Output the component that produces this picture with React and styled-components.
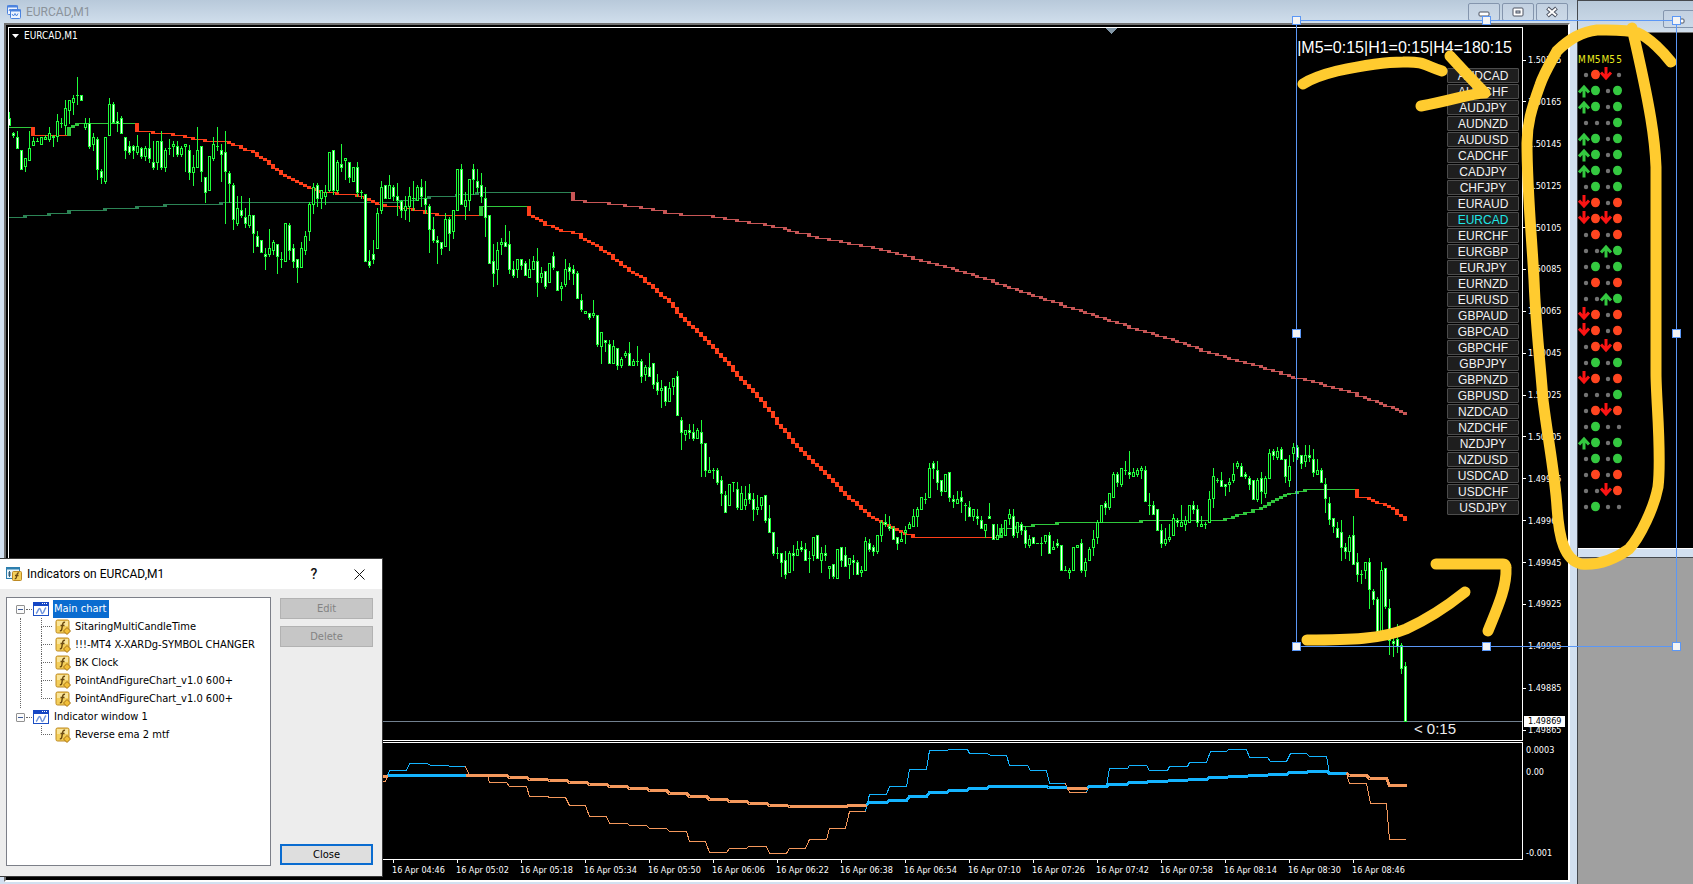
import { Fragment } from 'react';
import styled, { createGlobalStyle } from 'styled-components';

const GlobalStyle = createGlobalStyle`
  * {
    box-sizing: border-box;
  }
  body {
    margin: 0;
    background: #a0a0a0;
    overflow: hidden;
  }
  button {
    padding: 0;
    font: inherit;
  }
  ul {
    list-style: none;
    margin: 0;
    padding: 0;
  }
`;

const tahoma = `'DejaVu Sans Condensed', 'DejaVu Sans', sans-serif`;
const segoe = `Roboto, 'Open Sans', sans-serif`;
const arial = `'Liberation Sans', Arial, sans-serif`;

/* ---------- data ---------- */

const PAIRS = [
  ['AUDCAD', '.RD.'],
  ['AUDCHF', 'UG.G'],
  ['AUDJPY', 'UG.G'],
  ['AUDNZD', '...G'],
  ['AUDUSD', 'UG.G'],
  ['CADCHF', 'UG.G'],
  ['CADJPY', 'UG.G'],
  ['CHFJPY', '.G.G'],
  ['EURAUD', 'DR.R'],
  ['EURCAD', 'DRDR'],
  ['EURCHF', '.R.R'],
  ['EURGBP', '..UG'],
  ['EURJPY', '.G.G'],
  ['EURNZD', '.R.R'],
  ['EURUSD', '..UG'],
  ['GBPAUD', 'DR.R'],
  ['GBPCAD', 'DR.R'],
  ['GBPCHF', '.RDR'],
  ['GBPJPY', '.G.G'],
  ['GBPNZD', 'DR.R'],
  ['GBPUSD', '...G'],
  ['NZDCAD', '.RDR'],
  ['NZDCHF', '.G..'],
  ['NZDJPY', 'UG.G'],
  ['NZDUSD', '.G.G'],
  ['USDCAD', '.R.R'],
  ['USDCHF', '..DR'],
  ['USDJPY', '.G..'],
];

const PRICES = [
  '1.50185', '1.50165', '1.50145', '1.50125', '1.50105', '1.50085',
  '1.50065', '1.50045', '1.50025', '1.50005', '1.49985', '1.49965',
  '1.49945', '1.49925', '1.49905', '1.49885', '1.49865',
];

const TIMES = [
  '04:46', '05:02', '05:18', '05:34', '05:50', '06:06', '06:22', '06:38',
  '06:54', '07:10', '07:26', '07:42', '07:58', '08:14', '08:30', '08:46',
];

// one candle per entry: high, body top, body bottom, low, f = filled / h = hollow
const CANDLES = `
112 118 126 126 f,132 133 136 138 f,131 137 149 149 f,150 150 170 170 f,158 158 167 172 h,
131 148 161 161 h,137 141 146 146 h,138 141 142 142 h,137 137 145 145 h,135 137 140 140 h,
127 133 140 142 h,135 136 138 147 f,114 121 137 142 h,118 123 124 128 h,100 108 126 135 h,
100 100 111 124 h,95 98 103 115 h,77 95 96 105 h,95 95 101 101 f,118 123 128 130 h,
118 123 147 149 f,133 137 145 151 h,137 139 170 180 f,169 171 178 184 f,137 137 182 184 h,
98 104 136 136 h,102 104 123 124 f,112 121 124 132 f,116 118 134 134 f,137 137 151 159 f,
141 146 153 155 f,145 146 151 159 f,135 146 153 155 h,147 148 157 159 f,146 148 157 161 h,
133 148 159 163 f,141 162 168 170 f,141 141 163 170 h,131 141 168 170 f,148 150 168 172 h,
139 148 149 155 h,141 144 147 157 h,141 146 155 157 f,146 148 155 157 h,144 144 147 172 h,
145 150 173 180 f,155 167 173 186 h,127 150 168 168 h,146 146 172 182 f,177 177 193 203 f,
156 156 191 191 h,137 144 159 161 h,127 146 147 151 h,144 150 155 182 f,131 152 172 224 f,
171 173 184 203 f,183 185 220 230 f,196 208 224 226 h,196 210 216 218 f,208 217 224 228 f,
198 215 226 228 h,215 215 234 253 f,231 236 247 247 f,240 240 253 253 f,248 254 257 270 f,
229 248 255 257 h,240 242 251 255 h,244 244 257 274 f,252 259 260 268 h,223 223 262 262 h,
223 225 251 260 f,244 248 262 268 f,259 259 268 283 f,242 248 268 268 h,231 236 251 255 h,
202 204 232 241 h,183 187 205 214 h,183 185 199 207 f,190 190 199 209 h,185 192 197 205 h,
152 152 191 192 h,150 150 191 195 f,160 162 191 193 h,144 164 168 172 f,158 158 161 180 h,
162 162 178 183 f,167 167 182 182 h,162 167 193 197 f,190 192 193 199 h,194 194 262 262 f,
250 261 266 268 f,240 254 260 264 f,208 213 249 249 h,181 187 211 214 h,185 185 199 199 f,
175 185 199 199 h,185 187 197 201 f,183 196 201 216 f,200 201 211 218 f,196 206 211 220 h,
187 196 207 222 h,181 198 199 211 h,185 187 201 201 h,179 187 197 207 f,181 198 205 214 f,
204 206 230 253 f,217 229 241 243 f,236 240 243 264 f,242 242 249 255 f,213 219 247 247 h,
217 219 234 251 f,210 210 232 239 h,169 169 211 211 h,164 169 205 205 f,192 200 207 220 h,
179 179 201 211 h,164 169 180 195 f,169 181 188 193 f,173 185 197 203 f,187 198 218 237 f,
215 215 264 264 f,244 261 274 287 f,242 250 270 285 h,238 242 245 255 h,225 242 247 247 f,
231 244 270 274 f,261 269 276 278 f,259 259 270 278 h,259 259 266 270 f,261 263 276 276 f,
259 269 278 278 h,256 261 270 270 h,248 261 283 297 f,267 273 278 283 h,271 271 287 289 f,
263 263 283 283 h,252 256 268 270 f,271 271 291 291 f,282 286 289 301 h,259 269 285 287 h,
263 267 272 280 f,265 269 274 285 f,271 273 299 299 f,294 300 310 312 f,311 311 314 314 h,
313 313 318 320 f,300 313 316 318 h,315 315 345 347 f,332 332 347 364 h,340 340 343 352 f,
340 344 364 364 f,340 346 364 364 h,348 348 366 370 f,357 359 366 368 h,351 353 356 358 h,
342 353 366 366 f,359 361 366 366 h,346 361 362 366 h,359 361 377 383 f,365 367 375 381 h,
353 367 377 377 f,363 363 385 389 f,374 382 391 395 f,380 388 391 408 h,386 386 402 406 f,
382 388 402 402 h,378 378 387 395 h,371 376 416 416 f,417 420 433 450 f,430 430 435 441 h,
424 430 433 439 f,424 432 439 441 f,428 430 439 439 h,420 432 444 477 f,443 443 471 477 f,
457 470 473 473 h,468 470 471 479 h,468 470 483 485 f,476 480 494 506 f,491 495 513 513 f,
484 484 506 506 h,482 482 483 492 h,482 489 508 510 f,486 493 510 510 h,486 499 506 510 h,
484 493 500 504 f,493 499 510 521 f,495 507 510 515 h,497 497 506 510 h,495 495 521 523 f,
505 518 533 533 f,532 532 554 556 f,547 553 554 559 h,553 553 563 577 f,551 560 575 579 f,
551 553 573 573 h,545 553 556 571 f,541 549 556 556 h,541 547 550 552 f,543 549 561 561 f,
551 558 559 573 h,537 537 556 561 h,535 535 559 559 f,547 553 561 573 h,545 553 556 561 f,
566 566 569 579 h,564 564 577 579 f,549 549 579 579 h,547 547 561 567 f,547 555 567 567 f,
558 558 565 579 h,555 560 563 575 f,560 562 575 575 f,566 570 573 577 h,537 541 571 571 h,
539 543 550 552 f,545 547 552 556 f,535 535 552 554 h,520 522 536 542 h,514 522 525 527 f,
516 526 529 531 f,526 528 540 540 f,537 537 544 550 f,532 539 542 542 h,526 530 533 544 h,
522 524 529 529 h,509 516 527 527 h,507 509 517 527 h,497 497 510 510 h,493 499 500 504 h,
463 468 498 498 h,461 463 469 479 f,461 470 483 490 f,480 480 492 496 f,474 474 492 492 h,
472 472 498 502 f,495 499 502 508 f,491 499 504 504 h,491 497 502 513 f,503 505 506 521 h,
501 507 517 517 f,509 509 517 521 h,509 516 519 525 f,516 520 529 529 f,524 524 531 538 h,
503 516 519 519 f,524 524 540 540 f,524 535 540 540 h,524 532 536 536 h,520 520 536 536 h,
509 514 519 525 h,509 516 536 538 f,522 522 533 538 h,522 524 531 535 f,526 530 544 548 f,
535 539 546 548 h,537 537 544 544 f,543 543 544 544 h,537 543 544 556 h,535 535 542 544 h,
532 535 554 554 f,541 547 550 550 h,539 543 546 548 f,545 545 571 571 f,566 570 571 571 h,
568 570 573 579 h,547 547 571 571 h,545 545 548 548 h,539 543 571 573 f,558 562 571 577 h,
547 549 561 561 h,530 539 548 556 h,520 522 538 544 h,505 505 523 523 h,501 503 508 515 f,
493 493 508 510 h,472 474 498 498 h,472 474 483 487 f,468 468 485 487 h,461 470 471 475 h,
451 472 475 479 f,468 472 477 477 h,468 470 475 477 h,466 468 471 479 h,466 470 502 502 f,
493 505 506 515 h,501 505 515 515 f,509 509 531 531 f,524 530 544 548 f,528 539 544 546 h,
524 537 540 542 h,514 518 536 536 h,518 520 523 527 f,505 522 527 527 h,516 520 525 531 h,
505 505 523 523 h,501 505 510 514 f,505 509 523 527 f,516 524 527 527 h,522 524 525 529 h,
491 499 523 523 h,468 476 499 508 h,478 480 481 483 h,472 480 487 487 f,484 484 487 496 f,
478 482 485 492 h,463 474 481 483 h,461 463 467 469 h,463 466 477 477 f,472 474 477 479 f,
476 478 485 490 f,480 480 500 500 f,478 480 500 502 h,472 478 492 504 f,476 478 494 498 h,
449 453 479 479 h,449 451 456 460 f,447 451 458 460 h,447 449 460 460 f,459 459 477 483 f,
455 466 481 487 h,443 447 454 462 h,445 447 458 460 f,455 455 464 469 f,445 455 462 467 h,
445 455 458 462 f,449 459 473 477 f,459 470 475 475 h,468 470 483 483 f,478 484 499 513 f,
497 503 520 525 f,518 518 527 533 f,522 528 538 538 f,520 532 548 561 f,543 547 552 559 f,
535 537 552 561 h,516 535 565 565 f,553 562 575 582 f,570 574 575 584 h,562 562 571 579 h,
558 562 590 609 f,589 591 600 605 f,597 599 635 638 f,562 570 637 641 h,568 568 607 609 f,
599 608 641 655 f,635 641 644 657 f,624 639 647 653 f,643 645 669 674 f,662 666 722 722 f`
  .split(',')
  .map((row) => row.trim().split(' '));

// average lines: "x y", a letter after it switches the colour
const FAST_MA = `9 127 g,31 135 o,67 127 g,71 125,75 123,135 131 o,151 133,171 135,183 137,191 139,203 141,
227 143,231 145,239 148,243 150,251 152,255 156,259 158,263 160,267 164,271 168,275 170,279 174,283 176,
287 178,291 180,295 182,299 184,303 186,307 188,315 190,319 192,335 194,355 196,363 198,367 200,371 202,
375 204,383 206,399 208,411 210,423 213,435 215,479 206 g,527 215 o,531 217,535 219,539 221,543 225,
551 227,555 229,559 231,571 233,579 238,583 240,587 242,591 244,595 246,599 250,603 252,607 254,611 259,
615 261,619 265,623 267,627 271,631 273,635 275,639 277,643 282,647 284,651 288,655 292,659 296,663 298,
667 302,671 307,675 313,679 317,683 321,687 325,691 328,695 332,699 336,703 340,707 344,711 348,715 353,
719 357,723 361,727 365,731 371,735 376,739 380,743 384,747 388,751 392,755 397,759 401,763 407,767 411,
771 417,775 424,779 428,783 432,787 438,791 443,795 447,799 451,803 455,807 459,811 463,815 466,819 470,
823 474,827 478,831 482,835 486,839 491,843 495,847 499,851 501,855 505,859 509,863 512,867 516,871 518,
875 520,879 522,883 524,887 526,891 528,895 530,899 532,903 534,911 537,999 528 g,1015 526,1031 524,
1055 522,1139 520,1223 518,1231 516,1235 514,1243 512,1251 509,1259 507,1263 505,1267 502,1271 500,
1275 498,1279 496,1283 494,1287 493,1295 491,1303 489,1355 497 o,1367 499,1371 501,1375 503,1383 505,
1387 507,1391 509,1395 514,1399 516,1403 520`;

const SLOW_MA = `9 217 d,23 215,47 213,67 210,103 208,135 206,163 204,219 202,399 200,415 198,427 196,455 194,
475 192,571 200 p,583 202,607 204,623 206,639 208,651 210,663 213,679 215,711 217,723 219,735 221,747 223,
763 225,771 227,783 229,787 231,795 233,807 236,815 238,827 240,839 242,847 244,859 246,871 248,879 250,
887 252,895 254,903 256,911 259,919 261,927 263,935 265,943 267,951 269,955 271,963 273,971 275,975 277,
983 279,991 282,995 284,1003 286,1007 288,1015 290,1019 292,1027 294,1031 296,1039 298,1043 300,1051 302,
1059 305,1063 307,1071 309,1079 311,1083 313,1091 315,1095 317,1103 319,1107 321,1115 323,1123 325,
1127 328,1135 330,1143 332,1151 334,1155 336,1163 338,1171 340,1175 342,1183 344,1187 346,1195 348,
1199 351,1207 353,1215 355,1223 357,1227 359,1235 361,1243 363,1251 365,1259 367,1263 369,1271 371,
1279 374,1287 376,1291 378,1303 380,1311 382,1319 384,1323 386,1331 388,1339 390,1347 392,1355 396,
1363 398,1367 400,1375 402,1379 404,1383 406,1391 408,1395 410,1399 412,1403 414`;

const MA_COLORS = { g: '#30c83c', o: '#ff3f1a', d: '#2c8455', p: '#c85656' };

const OSC_THIN = [
  ['#f4985c', '382,781 385,781 386,778'],
  ['#14b4ff', '386,778 389,770 406,770 409,763 427,763 430,765 448,765 449,766 465,766'],
  [
    '#f4985c',
    '465,766 469,775 487,775 489,782 506,782 509,786 526,786 529,796 547,796 549,797 565,797 569,805 585,805 589,816 606,816 609,823 627,823 629,825 646,825 649,828 666,828 669,831 686,831 689,841 705,841 709,852 726,852 729,848 746,848 748,846 766,846 769,853 786,853 789,848 805,848 809,839 826,839 829,828 845,828 849,811 865,811',
  ],
  [
    '#14b4ff',
    '865,811 869,794 886,794 889,786 906,786 909,769 926,769 929,750 947,750 948,749 967,749 969,753 987,753 990,755 1006,755 1009,765 1027,765 1030,770 1046,770 1049,783 1065,783',
  ],
  ['#f4985c', '1065,783 1069,792 1086,792'],
  [
    '#14b4ff',
    '1086,792 1088,786 1106,786 1109,768 1127,768 1129,765 1146,765 1149,770 1167,770 1169,766 1187,766 1189,762 1206,762 1210,751 1226,751 1228,749 1246,749 1249,757 1267,757 1270,761 1286,761 1290,753 1306,753 1309,756 1326,756 1329,773 1346,773',
  ],
  ['#f4985c', '1346,773 1349,783 1366,783 1370,803 1386,803 1389,839 1405,839'],
];

const OSC_THICK = [
  ['#f4985c', '382,776 387,776'],
  ['#14b4ff', '387,775 465,775'],
  [
    '#f4985c',
    '465,775 506,775 509,777 526,777 529,779 546,779 549,780 566,780 569,782 586,782 589,784 606,784 609,786 626,786 629,788 646,788 649,790 666,790 669,793 686,793 689,796 706,796 709,799 726,799 729,801 746,801 749,803 766,803 769,805 786,805 789,806 846,806 848,805 866,805',
  ],
  [
    '#14b4ff',
    '866,804 869,802 886,802 889,800 906,800 909,796 926,796 929,792 946,792 949,790 966,790 969,788 986,788 989,786 1046,786 1048,787 1066,787',
  ],
  ['#f4985c', '1066,788 1087,788'],
  [
    '#14b4ff',
    '1087,787 1089,786 1106,786 1109,784 1126,784 1129,782 1146,782 1148,781 1166,781 1169,780 1186,780 1189,779 1206,779 1209,777 1226,777 1229,776 1246,776 1249,775 1266,775 1269,774 1286,774 1289,772 1306,772 1308,771 1326,771 1329,773 1346,773',
  ],
  ['#f4985c', '1346,773 1349,775 1366,775 1369,778 1386,778 1389,785 1406,785'],
];

const TREE = [
  {
    name: 'Main chart',
    selected: true,
    items: [
      'SitaringMultiCandleTime',
      '!!!-MT4 X-XARDg-SYMBOL CHANGER',
      'BK Clock',
      'PointAndFigureChart_v1.0 600+',
      'PointAndFigureChart_v1.0 600+',
    ],
  },
  { name: 'Indicator window 1', items: ['Reverse ema 2 mtf'] },
];

/* ---------- windows ---------- */

const Desktop = styled.div`
  position: relative;
  display: flex;
  min-height: 100vh;
  background: #a0a0a0;
  overflow: hidden;
`;

const MainWindow = styled.main`
  flex: 1;
  min-width: 0;
  display: flex;
  flex-direction: column;
  padding: 0 7px 2px 4px;
  background: #d2e0f0;
`;

const TitleBar = styled.header`
  display: flex;
  align-items: center;
  height: 23px;
  margin: 0 -7px 0 -4px;
  padding: 0 9px 0 7px;
  gap: 5px;
  background: linear-gradient(#b8c9da, #d0deec);
  color: #8b939b;
  font: 12px ${segoe};
`;

const WindowTitle = styled.span`
  flex: 1;
`;

const WindowButtons = styled.div`
  display: flex;
  gap: 2px;
`;

const CaptionButton = styled.button`
  display: flex;
  align-items: center;
  justify-content: center;
  flex: none;
  width: 32px;
  height: 18px;
  border: 1px solid #8495ad;
  border-radius: 2px;
  background: linear-gradient(#c3d1e1, #cbd9e8);
`;

const Frame = styled.section`
  flex: 1;
  display: grid;
  grid-template-columns: minmax(0, 1fr) 45px;
  grid-template-rows: minmax(714px, 1fr) 119px 20px;
  padding: 2px 0 0 2px;
  background: #000;
  border-style: solid;
  border-width: 2px;
  border-color: #707070 #fff #fff #707070;
`;

const Pane = styled.div`
  position: relative;
  display: flex;
  justify-content: flex-end;
  border: 1px solid #fff;
  margin-top: ${(p) => (p.$gap ? '1px' : 0)};
  overflow: hidden;
`;

const Plot = styled.svg`
  flex: none;
  display: block;
`;

const PaneOverlay = styled.div`
  position: absolute;
  inset: 0;
  display: flex;
  flex-direction: column;
`;

const PaneHeader = styled.div`
  display: flex;
  justify-content: space-between;
  height: 40px;
  padding: 0 10px 0 3px;
  color: #fff;
`;

const SymbolName = styled.span`
  display: flex;
  align-items: center;
  gap: 5px;
  height: 15px;
  font: 10px ${tahoma};
`;

const Countdown = styled.span`
  padding-top: 11px;
  font: 16px/18px ${arial};
`;

const PairList = styled.nav`
  align-self: flex-end;
  display: flex;
  flex-direction: column;
  gap: 1px;
  width: 72px;
  margin-right: 3px;
`;

const PairButton = styled.button`
  height: 15px;
  border: 1px solid #4c4c4c;
  border-radius: 1px;
  background: #1e1e1e;
  color: ${(p) => (p.$active ? '#1fe6e6' : '#f2f2f2')};
  font: 12px/12px ${arial};
`;

const TickClock = styled.span`
  align-self: flex-end;
  margin: auto 66px 2px 0;
  color: #eee;
  font: 15px/18px ${arial};
`;

const PriceAxis = styled.div`
  position: relative;
  display: flex;
  flex-direction: column;
  justify-content: space-between;
  padding: 26px 0 4px;
  color: #fff;
  font: 9px/14px ${tahoma};
`;

const AxisLabel = styled.span`
  display: flex;
  align-items: center;
  gap: 2px;
  &::before {
    content: '';
    width: 3px;
    height: 1px;
    background: #fff;
  }
`;

const CurrentPrice = styled.span`
  position: absolute;
  left: 1px;
  bottom: 14px;
  width: 41px;
  padding-left: 4px;
  background: #fff;
  color: #000;
  line-height: 11px;
`;

const OscAxis = styled.div`
  display: flex;
  flex-direction: column;
  padding: 2px 0 0 3px;
  color: #fff;
  font: 9px/14px ${tahoma};
  & > :nth-child(2) {
    margin-top: 8px;
  }
  & > :last-child {
    margin-top: auto;
  }
`;

const TimeAxis = styled.div`
  display: flex;
  padding-left: 384px;
  color: #fff;
  font: 9px/14px ${tahoma};
`;

const TimeLabel = styled.span`
  flex: none;
  width: 64px;
  white-space: nowrap;
  &::before {
    content: '';
    display: block;
    width: 1px;
    height: 3px;
    margin-left: 1px;
    background: #fff;
  }
`;

const SideArea = styled.aside`
  flex: none;
  width: 116px;
  border-left: 1px solid #45494e;
  overflow: hidden;
`;

const SideWindow = styled.section`
  display: flex;
  flex-direction: column;
  height: 558px;
  border-top: 1px solid #45494e;
  border-bottom: 1px solid #45494e;
  background: #d2e0f0;
`;

const SideTitle = styled.header`
  display: flex;
  justify-content: flex-end;
  align-items: flex-end;
  height: 31px;
  padding-bottom: 4px;
  margin-right: -2px;
  background: linear-gradient(#b8c9da, #d0deec);
`;

const SideBody = styled.div`
  flex: 1;
  margin-bottom: 8px;
  padding-top: 19px;
  border-top: 1px solid #707070;
  border-bottom: 1px solid #fff;
  background: #000;
`;

const SignalHeader = styled.div`
  display: flex;
  justify-content: space-between;
  width: 44px;
  height: 14px;
  color: #eaea1e;
  font: 10px/16px ${tahoma};
`;

const SignalRow = styled.div`
  display: grid;
  grid-template-columns: repeat(4, 11px);
  align-items: center;
  height: 16px;
  padding-left: 1px;
  & > svg {
    display: block;
    overflow: visible;
  }
`;

/* ---------- dialog ---------- */

const Dialog = styled.section`
  position: absolute;
  left: 0;
  bottom: 7px;
  width: 383px;
  border: 1px solid #3a3a3a;
  border-left: 0;
  background: #ededed;
  color: #000;
`;

const DialogTitle = styled.header`
  display: flex;
  align-items: center;
  gap: 5px;
  height: 30px;
  padding: 0 16px 0 6px;
  background: #fff;
  font: 12px ${segoe};
`;

const DialogTitleText = styled.h1`
  flex: 1;
  margin: 0;
  font: inherit;
`;

const BareButton = styled.button`
  display: flex;
  align-items: center;
  justify-content: center;
  width: 14px;
  height: 20px;
  margin-left: 26px;
  border: 0;
  background: none;
  color: #111;
  font: 500 14px ${segoe};
`;

const DialogBody = styled.div`
  display: flex;
  gap: 9px;
  padding: 8px 9px 10px 6px;
`;

const TreeBox = styled.div`
  flex: 1;
  height: 269px;
  padding: 2px 0 0 9px;
  border: 1px solid #7c7f88;
  background: #fff;
  font: 11px/18px ${tahoma};
  white-space: nowrap;
`;

const TreeRow = styled.div`
  display: flex;
  align-items: center;
  height: 18px;
`;

const Toggle = styled.button`
  display: flex;
  align-items: center;
  justify-content: center;
  width: 9px;
  height: 9px;
  border: 1px solid #919191;
  border-radius: 1px;
  background: #fbfbfb;
  &::before {
    content: '';
    width: 5px;
    height: 1px;
    background: #3b5998;
  }
`;

const Dots = styled.span`
  width: 6px;
  margin: 0 1px;
  border-top: 1px dotted #666;
`;

const RootLabel = styled.span`
  margin-left: 4px;
  padding: 0 2px 0 1px;
  background: ${(p) => (p.$selected ? '#0a6cd0' : 'transparent')};
  color: ${(p) => (p.$selected ? '#fff' : '#000')};
`;

const Branch = styled.ul`
  margin-left: 4px;
  padding-left: 20px;
  border-left: 1px dotted ${(p) => (p.$last ? 'transparent' : '#666')};
`;

const Elbow = styled.span`
  display: grid;
  grid-template-rows: 9px 9px;
  width: 11px;
  margin-right: 3px;
  &::before {
    content: '';
    border: 0 dotted #666;
    border-width: 0 0 1px 1px;
  }
  &::after {
    content: '';
    border-left: ${(p) => (p.$last ? '0' : '1px dotted #666')};
  }
`;

const LeafLabel = styled.span`
  margin-left: 4px;
`;

const ButtonColumn = styled.div`
  display: flex;
  flex-direction: column;
  gap: 7px;
  width: 93px;
  padding: 1px 0;
`;

const DialogButton = styled.button`
  height: 21px;
  border: 1px solid #b2b2b2;
  background: #c6c6c6;
  color: #838383;
  font: 11px ${tahoma};
  &:last-child {
    margin-top: auto;
    border: 2px solid #0a6cd0;
    background: #dedede;
    color: #000;
  }
`;

const Annotations = styled.svg`
  position: absolute;
  top: 0;
  right: 0;
  pointer-events: none;
`;

/* ---------- icons ---------- */

const ChartsIcon = () => (
  <svg width="14" height="14" viewBox="0 0 14 14" aria-hidden="true">
    <rect x="0.5" y="0.5" width="10" height="9" rx="1" fill="#eef4ff" stroke="#4c83de" />
    <path d="M0 1.500h11" stroke="#4c83de" strokeWidth="2" />
    <path d="M2 6l1-2 1.500 2 1.500-2" fill="none" stroke="#4c83de" />
    <rect x="3.500" y="4.500" width="10" height="9" rx="1" fill="#eef4ff" stroke="#4c83de" />
    <path d="M3 5.500h11" stroke="#4c83de" strokeWidth="2" />
    <path d="M5 9l1.500 2 1.500-2.500 1.500 2.500 1.500-2.500" fill="none" stroke="#4c83de" />
  </svg>
);

const MinIcon = () => (
  <svg width="12" height="12" viewBox="0 0 12 12" aria-hidden="true">
    <rect x="1" y="6" width="10" height="4" rx="1" fill="#fff" stroke="#4d5361" />
  </svg>
);

const MaxIcon = () => (
  <svg width="12" height="12" viewBox="0 0 12 12" aria-hidden="true">
    <rect x="1" y="2" width="10" height="8" rx="1" fill="#fff" stroke="#4d5361" />
    <rect x="4" y="5" width="4" height="2" fill="#c8d6e5" stroke="#4d5361" />
  </svg>
);

const CloseIcon = () => (
  <svg width="12" height="12" viewBox="0 0 12 12" aria-hidden="true">
    <path d="M1.500 2l9 8M10.500 2l-9 8" stroke="#4d5361" strokeWidth="4" />
    <path d="M2 2.500l8 7M10 2.500l-8 7" stroke="#fff" strokeWidth="2" />
  </svg>
);

const FunctionIcon = () => (
  <svg width="16" height="16" viewBox="0 0 16 16" aria-hidden="true">
    <rect x="1" y="1" width="13" height="13" rx="1.500" fill="#f4cf5c" stroke="#bd8a24" />
    <rect x="2" y="2" width="11" height="5" fill="#fae59a" />
    <path
      d="M10 3.500c-1.600-.6-2.100.4-2.400 2L6.700 10.500c-.3 1.300-.9 1.500-1.900 1.200M5.500 6.500h4"
      fill="none"
      stroke="#6b4a10"
      strokeWidth="1.400"
    />
    <path d="M12 8.500l3.500 3.500-3.500 3.500L8.500 12z" fill="#f2bf38" stroke="#a87414" />
  </svg>
);

const WindowIcon = () => (
  <svg width="16" height="14" viewBox="0 0 16 14" aria-hidden="true">
    <rect x="0.500" y="0.500" width="15" height="13" fill="#fff" stroke="#1c4fc4" />
    <rect width="16" height="4" fill="#1546c4" />
    <path d="M9 1.500h1M11 1.500h1M13 1.500h1" stroke="#fff" />
    <path d="M3 11.500c2-1 2-5 3.500-5s1.500 5 3 5 1.500-4 3.500-6" fill="none" stroke="#6f94dd" strokeWidth="1.500" />
  </svg>
);

const IndicatorsIcon = () => (
  <svg width="16" height="15" viewBox="0 0 16 15" aria-hidden="true">
    <rect x="0.500" y="0.500" width="13" height="11" fill="#eaf5fc" stroke="#2d7fae" />
    <path d="M0 1.500h14" stroke="#2d7fae" strokeWidth="2" />
    <path d="M3.500 4v6M2 6h3M2 8h3" stroke="#375f78" />
    <rect x="6.500" y="4.500" width="9" height="9" rx="1" fill="#f4cf5c" stroke="#bd8a24" />
    <path d="M13 6c-1.400-.4-1.700.4-2 1.600l-.7 3c-.2 1-.8 1.200-1.600 1M9 8.500h3.500" fill="none" stroke="#6b4a10" strokeWidth="1.300" />
  </svg>
);

const Signal = ({ type }) => (
  <svg width="11" height="12" viewBox="0 0 11 12" aria-hidden="true">
    {type === '.' && <circle cx="7" cy="7" r="2.200" fill="#737373" />}
    {type === 'R' && <ellipse cx="5.500" cy="6.500" rx="4.500" ry="4.800" fill="#ff4520" />}
    {type === 'G' && <ellipse cx="5.500" cy="6.500" rx="4.500" ry="4.800" fill="#34c840" />}
    {type === 'D' && (
      <path d="M5-1v11M0 4.500l5 5.500 5-5.500" fill="none" stroke="#fb1414" strokeWidth="3" />
    )}
    {type === 'U' && (
      <path d="M5 13.500V3M0 8.500L5 3l5 5.500" fill="none" stroke="#34c840" strokeWidth="3" />
    )}
  </svg>
);

/* ---------- drawing ---------- */

const StepLine = ({ data }) => {
  let color = '';
  const steps = data.split(',').map((row) => {
    const [x, y, c] = row.trim().split(' ');
    color = c || color;
    return { x: Number(x), y: Number(y), color };
  });
  return steps.map((s, i) => {
    const next = steps[i + 1] ? steps[i + 1].x : s.x + 4;
    const prev = i ? steps[i - 1].y : s.y;
    return (
      <Fragment key={s.x}>
        <rect x={s.x} y={s.y} width={next - s.x} height="1" fill={MA_COLORS[s.color]} />
        {i > 0 && (
          <rect
            x={s.x}
            y={Math.min(prev, s.y)}
            width="4"
            height={Math.abs(s.y - prev) + 1}
            fill={MA_COLORS[s.color]}
          />
        )}
      </Fragment>
    );
  });
};

const Candle = ({ x, candle }) => {
  const [high, top, bottom, low] = candle.map(Number);
  const height = bottom - top;
  return (
    <>
      <rect x={x} y={high} width="1" height={low - high} fill="#1fff3a" />
      <rect x={x - 1} y={top} width="3" height={height} fill="#1fff3a" />
      {height > 2 && (
        <rect x={x} y={top + 1} width="1" height={height - 2} fill={candle[4] === 'f' ? '#fff' : '#000'} />
      )}
    </>
  );
};

const PricePlot = () => (
  <Plot width="1513" height="712" viewBox="9 28 1513 712" shapeRendering="crispEdges" role="img" aria-label="EURCAD price">
    <rect x="9" y="721" width="1513" height="1" fill="#71808f" />
    <path d="M1106 28h11l-5.500 6z" fill="#8296a6" />
    <StepLine data={SLOW_MA} />
    <StepLine data={FAST_MA} />
    {CANDLES.map((candle, i) => (
      <Candle key={i} x={9 + i * 4} candle={candle} />
    ))}
  </Plot>
);

const OscPlot = () => (
  <Plot width="1513" height="116" viewBox="9 743 1513 116" shapeRendering="crispEdges" role="img" aria-label="Reverse ema">
    <g fill="none" transform="translate(0.5 0.5)">
      {OSC_THIN.map(([stroke, points]) => (
        <polyline key={points} points={points} stroke={stroke} />
      ))}
      {OSC_THICK.map(([stroke, points]) => (
        <polyline key={points} points={points} stroke={stroke} strokeWidth="3" />
      ))}
    </g>
  </Plot>
);

const Handle = ({ x, y }) => (
  <rect x={x - 4} y={y - 4} width="8" height="8" fill="#f4f4f4" stroke="#5b97f6" />
);

const Markup = () => (
  <Annotations width="420" height="700" viewBox="1273 0 420 700" aria-hidden="true">
    <g fill="none" stroke="#ffcb2f" strokeWidth="11" strokeLinecap="round" strokeLinejoin="round">
      <path d="M1303 84C1312 78 1325 74 1337 71C1360 66 1385 62 1403 62C1424 61 1426 66 1442 71" />
      <path d="M1450 56C1462 69 1478 86 1485 93C1472 93 1450 101 1421 106" />
      <path d="M1671 62C1664 53 1650 38 1638 33C1626 29 1603 30 1597 30C1580 32 1566 42 1557 51C1551 62 1544 73 1540 85C1531 110 1527 125 1527 143C1527 190 1532 240 1534 280C1536 330 1541 370 1543 400C1548 440 1555 475 1557 507C1559 540 1565 560 1581 564C1600 566 1618 557 1629 549C1640 537 1654 508 1658 487C1662 455 1656 400 1656 373V167C1655 140 1651 110 1632 28" />
      <path d="M1307 640C1350 640 1382 639 1406 629C1430 618 1450 604 1465 592" />
      <path d="M1436 564H1503Q1506 564 1506 568C1507 588 1496 611 1488 631" />
    </g>
    <rect x="1296.500" y="20.500" width="380" height="626" fill="none" stroke="#5b97f6" />
    {[1296.5, 1486.5, 1676.5].map((x) => (
      <Fragment key={x}>
        <Handle x={x} y={20.5} />
        {x !== 1486.5 && <Handle x={x} y={333.5} />}
        <Handle x={x} y={646.5} />
      </Fragment>
    ))}
  </Annotations>
);

/* ---------- parts ---------- */

const Chart = () => (
  <Frame>
    <Pane>
      <PricePlot />
      <PaneOverlay>
        <PaneHeader>
          <SymbolName>
            <svg width="7" height="4" aria-hidden="true">
              <path d="M0 0h7l-3.500 4z" fill="#fff" />
            </svg>
            EURCAD,M1
          </SymbolName>
          <Countdown>|M5=0:15|H1=0:15|H4=180:15</Countdown>
        </PaneHeader>
        <PairList>
          {PAIRS.map(([name]) => (
            <PairButton key={name} $active={name === 'EURCAD'}>
              {name}
            </PairButton>
          ))}
        </PairList>
        <TickClock>&lt; 0:15</TickClock>
      </PaneOverlay>
    </Pane>
    <PriceAxis>
      {PRICES.map((price) => (
        <AxisLabel key={price}>{price}</AxisLabel>
      ))}
      <CurrentPrice>1.49869</CurrentPrice>
    </PriceAxis>
    <Pane $gap>
      <OscPlot />
    </Pane>
    <OscAxis>
      <span>0.0003</span>
      <span>0.00</span>
      <span>-0.001</span>
    </OscAxis>
    <TimeAxis>
      {TIMES.map((time) => (
        <TimeLabel key={time}>16 Apr {time}</TimeLabel>
      ))}
    </TimeAxis>
  </Frame>
);

const IndicatorsDialog = () => (
  <Dialog role="dialog" aria-labelledby="dialog-title">
    <DialogTitle>
      <IndicatorsIcon />
      <DialogTitleText id="dialog-title">Indicators on EURCAD,M1</DialogTitleText>
      <BareButton>?</BareButton>
      <BareButton aria-label="Close window">
        <svg width="11" height="11" aria-hidden="true">
          <path d="M.5.5l10 10M10.500.5l-10 10" stroke="#111" />
        </svg>
      </BareButton>
    </DialogTitle>
    <DialogBody>
      <TreeBox>
        {TREE.map((group, g) => (
          <Fragment key={group.name}>
            <TreeRow>
              <Toggle aria-label={`Collapse ${group.name}`} />
              <Dots />
              <WindowIcon />
              <RootLabel $selected={group.selected}>{group.name}</RootLabel>
            </TreeRow>
            <Branch $last={g === TREE.length - 1}>
              {group.items.map((item, i) => (
                <li key={i}>
                  <TreeRow>
                    <Elbow $last={i === group.items.length - 1} />
                    <FunctionIcon />
                    <LeafLabel>{item}</LeafLabel>
                  </TreeRow>
                </li>
              ))}
            </Branch>
          </Fragment>
        ))}
      </TreeBox>
      <ButtonColumn>
        <DialogButton disabled>Edit</DialogButton>
        <DialogButton disabled>Delete</DialogButton>
        <DialogButton>Close</DialogButton>
      </ButtonColumn>
    </DialogBody>
  </Dialog>
);

const App = () => {
  return (
    <>
      <GlobalStyle />
      <Desktop>
        <MainWindow>
          <TitleBar>
            <ChartsIcon />
            <WindowTitle>EURCAD,M1</WindowTitle>
            <WindowButtons>
              <CaptionButton aria-label="Minimize">
                <MinIcon />
              </CaptionButton>
              <CaptionButton aria-label="Maximize">
                <MaxIcon />
              </CaptionButton>
              <CaptionButton aria-label="Close">
                <CloseIcon />
              </CaptionButton>
            </WindowButtons>
          </TitleBar>
          <Chart />
        </MainWindow>
        <SideArea>
          <SideWindow>
            <SideTitle>
              <CaptionButton aria-label="Minimize">
                <MinIcon />
              </CaptionButton>
            </SideTitle>
            <SideBody>
              <SignalHeader>
                <span>M</span>
                <span>M5</span>
                <span>M5</span>
                <span>5</span>
              </SignalHeader>
              {PAIRS.map(([name, signals]) => (
                <SignalRow key={name}>
                  {signals.split('').map((type, i) => (
                    <Signal key={i} type={type} />
                  ))}
                </SignalRow>
              ))}
            </SideBody>
          </SideWindow>
        </SideArea>
        <IndicatorsDialog />
        <Markup />
      </Desktop>
    </>
  );
};

export default App;
